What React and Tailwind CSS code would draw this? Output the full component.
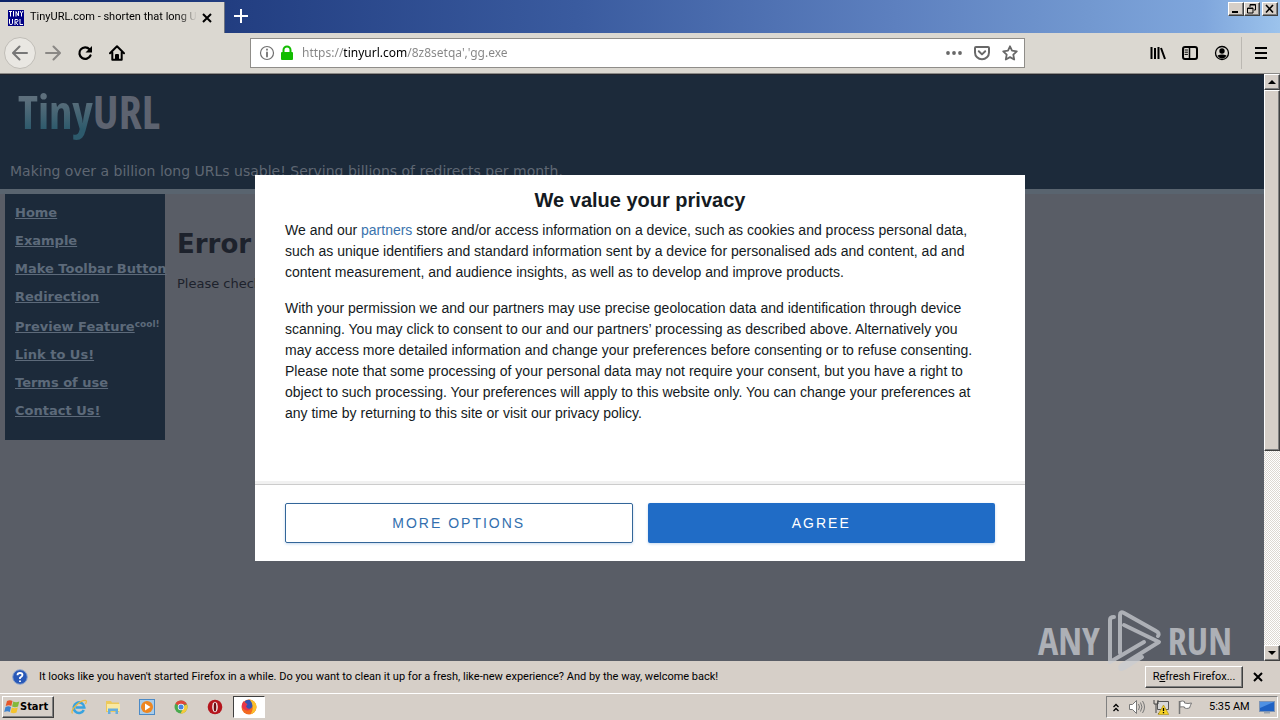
import React from 'react';

const bevelOut =
  'border border-t-white border-l-white border-r-[#404040] border-b-[#404040] shadow-[inset_-1px_-1px_0_#808080]';
const bevelIn = 'border border-t-[#808080] border-l-[#808080] border-r-white border-b-white';

const sidebarLinks = [
  { label: 'Home' },
  { label: 'Example' },
  { label: 'Make Toolbar Button' },
  { label: 'Redirection' },
  { label: 'Preview Feature', note: 'cool!' },
  { label: 'Link to Us!' },
  { label: 'Terms of use' },
  { label: 'Contact Us!' },
];

const Icon = ({ children, className = 'h-4 w-4', viewBox = '0 0 16 16' }) => (
  <svg
    viewBox={viewBox}
    className={className}
    fill="none"
    stroke="currentColor"
    strokeWidth="2"
    strokeLinecap="round"
    strokeLinejoin="round"
    aria-hidden="true"
  >
    {children}
  </svg>
);

const CloseIcon = ({ className }) => (
  <Icon className={className} viewBox="0 0 10 10">
    <path d="M1 1l8 8M9 1l-8 8" strokeLinecap="butt" />
  </Icon>
);

/* Tab strip with window controls */
const TitleBar = () => (
  <header className="flex h-[33px] shrink-0 items-start bg-[linear-gradient(to_right,#0c2468_0%,#233f82_19%,#3a5b9f_45%,#5d80bf_70%,#7298d0_85%,#7fa6dc_94%,#9cc3ec_100%)]">
    <div className="mt-0.5 flex h-[31px] w-[225px] items-center border-r border-[#6d7380] bg-[#dbd8d1] pl-2">
      <svg viewBox="0 0 16 16" className="h-4 w-4 shrink-0" aria-hidden="true">
        <rect width="16" height="16" fill="#000085" />
        <path
          d="M1 1.500h3M2.500 1.500v5M5.500 1v5.500M8 6.500v-5l2.500 4.500v-5M12 1l1.500 2.500L15 1M13.500 3v3.500M1.500 9v4.500q0 1 1.500 1t1.500-1V9M7 15V9.500h2q1 0 1 1t-1 1.500H7.500L10 15M12 9v5.500h3"
          fill="none"
          stroke="#fff"
        />
      </svg>
      <div className="ml-1.5 w-[167px] overflow-hidden bg-[linear-gradient(to_right,#000_148px,transparent_167px)] bg-clip-text text-[11px] whitespace-nowrap text-transparent">
        TinyURL.com - shorten that long URL
      </div>
      <button aria-label="Close tab" className="flex h-5 w-5 items-center justify-center">
        <CloseIcon className="h-2.5 w-2.5" />
      </button>
    </div>
    <button aria-label="New tab" className="flex h-8 w-8 items-center justify-center text-white">
      <Icon className="h-3.5 w-3.5" viewBox="0 0 14 14">
        <path d="M7 0v14M0 7h14" strokeLinecap="butt" />
      </Icon>
    </button>
    <div className="mt-0.5 mr-0.5 ml-auto flex">
      <button aria-label="Minimize" className={`flex h-3.5 w-4 items-center justify-center bg-[#d6cfc8] ${bevelOut}`}>
        <svg viewBox="0 0 12 10" className="h-2.5 w-3" aria-hidden="true">
          <path d="M2 7h6v2H2z" />
        </svg>
      </button>
      <button aria-label="Restore" className={`flex h-3.5 w-4 items-center justify-center bg-[#d6cfc8] ${bevelOut}`}>
        <svg viewBox="0 0 12 10" className="h-2.5 w-3" fill="none" stroke="#000" aria-hidden="true">
          <path d="M4 3V.5h5.500V6H8M4 1h5.500M1.500 4h5.500v5H1.500zM1.500 4.500h5.500" />
        </svg>
      </button>
      <button aria-label="Close" className={`ml-0.5 flex h-3.5 w-4 items-center justify-center bg-[#d6cfc8] ${bevelOut}`}>
        <svg viewBox="0 0 12 10" className="h-2.5 w-3" fill="none" stroke="#000" strokeWidth="1.600" aria-hidden="true">
          <path d="M2 1l7 7.500M9 1L2 8.500" />
        </svg>
      </button>
    </div>
  </header>
);

const NavBar = () => (
  <nav className="flex h-[41px] shrink-0 items-center border-b border-[#8b8a87] bg-[#dbd8d1] pl-1">
    <button aria-label="Back" className="flex h-8 w-8 items-center justify-center rounded-full border border-[#c0bdb7] bg-[#e9e7e2] text-[#777]">
      <Icon>
        <path d="M15 8H1.500M7.500 1.500L1 8l6.500 6.500" />
      </Icon>
    </button>
    <div className="ml-px flex">
      <button aria-label="Forward" className="flex h-8 w-8 items-center justify-center text-[#8a8885]">
        <Icon>
          <path d="M1 8h13.500M8.500 1.500L15 8l-6.500 6.500" />
        </Icon>
      </button>
      <button aria-label="Reload" className="flex h-8 w-8 items-center justify-center">
        <Icon>
          <path d="M12.500 4.200A5.800 5.800 0 1 0 13.500 10.500" strokeWidth="2.200" />
          <path d="M15 1v6.500H8.500z" fill="currentColor" stroke="none" />
        </Icon>
      </button>
      <button aria-label="Home" className="flex h-8 w-8 items-center justify-center">
        <Icon>
          <path d="M1 8.200L8 1.300l7 6.900M3.300 7.500v7.200h9.400V7.500" />
          <path d="M7 14v-4h2v4" />
        </Icon>
      </button>
    </div>
    <div className="ml-[117px] flex h-[30px] min-w-0 flex-1 items-center border border-[#8f8d89] bg-white pr-1.5 pl-2">
      <Icon className="h-4 w-4 shrink-0 text-[#6f6f6f]">
        <circle cx="8" cy="8" r="6.500" strokeWidth="1.200" />
        <path d="M8 7.500v4M8 4.500v.3" strokeWidth="1.800" />
      </Icon>
      <svg viewBox="0 0 16 16" className="ml-1 h-4 w-4 shrink-0" aria-hidden="true">
        <path d="M4.500 8V5a3.500 3.500 0 0 1 7 0v3" fill="none" stroke="#12bc00" strokeWidth="2" />
        <rect x="2" y="7" width="12" height="8" rx="1" fill="#12bc00" />
      </svg>
      <input
        aria-label="Address"
        defaultValue="https://tinyurl.com/8z8setqa','gg.exe"
        spellCheck={false}
        className="ml-[7px] min-w-0 flex-1 bg-[linear-gradient(to_right,#858585_42px,#000_42px,#000_105px,#858585_105px)] bg-clip-text font-['Noto_Sans','Liberation_Sans',sans-serif] text-xs text-transparent outline-none"
      />
      <div className="flex gap-3 text-[#686868]">
        <button aria-label="Page actions">
          <svg viewBox="0 0 16 16" className="h-4 w-4" fill="currentColor" aria-hidden="true">
            <circle cx="2" cy="8" r="1.900" />
            <circle cx="8" cy="8" r="1.900" />
            <circle cx="14" cy="8" r="1.900" />
          </svg>
        </button>
        <button aria-label="Save to Pocket">
          <Icon>
            <path d="M2 2h12q1 0 1 1v4.500a7 6.800 0 0 1-14 0V3q0-1 1-1z" />
            <path d="M4.800 6.300L8 9.400l3.200-3.100" />
          </Icon>
        </button>
        <button aria-label="Bookmark this page">
          <Icon>
            <path d="M8 1.300l2 4.400 4.800.6-3.500 3.300.9 4.900L8 12.100l-4.200 2.400.9-4.900L1.200 6.300 6 5.700z" strokeWidth="1.800" />
          </Icon>
        </button>
      </div>
    </div>
    <div className="mr-[3px] ml-[117px] flex items-center">
      <button aria-label="Library" className="flex h-8 w-8 items-center justify-center">
        <Icon>
          <path d="M1.500 2v12M5 3v11M8.500 2v12M11 3l4 11" strokeLinecap="butt" />
        </Icon>
      </button>
      <button aria-label="Sidebars" className="flex h-8 w-8 items-center justify-center">
        <Icon>
          <rect x="1" y="2" width="14" height="12" rx="2" />
          <path d="M7.500 2v12" strokeWidth="1.500" />
          <path d="M3 5h2.500M3 7.200h2.500M3 9.400h2.500" strokeWidth="1" />
        </Icon>
      </button>
      <button aria-label="Account" className="flex h-8 w-8 items-center justify-center">
        <Icon>
          <circle cx="8" cy="8" r="6.500" strokeWidth="1.300" />
          <circle cx="8" cy="6" r="2.700" fill="currentColor" stroke="none" />
          <path d="M3.500 10.500q4.500-2 9 0-1.500 3-4.500 3t-4.500-3z" fill="currentColor" stroke="none" />
        </Icon>
      </button>
      <div className="ml-[3px] h-8 w-px bg-[#bbb8b2]" />
      <button aria-label="Menu" className="ml-[3px] flex h-8 w-8 items-center justify-center">
        <Icon>
          <path d="M2 3h12M2 8h12M2 13h12" strokeLinecap="butt" />
        </Icon>
      </button>
    </div>
  </nav>
);

const SitePage = () => (
  <div className="min-w-0 flex-1 overflow-hidden bg-[#595d66] font-['DejaVu_Sans',Verdana,sans-serif]">
    <div className="h-[115px] border-t border-[#22242c] bg-[#1c2a3a] px-2.5 pt-1.5">
      <div className="pl-2 font-['Open_Sans_Condensed','Roboto_Condensed','Liberation_Sans_Narrow',sans-serif] text-[46px] leading-[60px] font-bold">
        <span className="bg-[linear-gradient(to_bottom,#5d6f7c_30%,#2d5a6c_80%)] bg-clip-text text-transparent">Tiny</span>
        <span className="text-[#5d6370]">URL</span>
      </div>
      <p className="mt-5 text-sm whitespace-nowrap text-[#5f6773]">
        Making over a billion long URLs usable! Serving billions of redirects per month.
      </p>
    </div>
    <div className="h-[5px] bg-[#59646f]" />
    <div className="flex pl-[5px]">
      <ul className="h-[246px] w-40 bg-[#1c2a3a] pt-[5px] pl-2.5 text-[13px] leading-7 font-bold whitespace-nowrap text-[#5d6a7a]">
        {sidebarLinks.map(({ label, note }) => (
          <li key={label} className={note ? 'h-[30px] pt-0.5' : 'h-7'}>
            <a href="#" className="underline">
              {label}
            </a>
            {note && <sup className="text-[9px] leading-none">{note}</sup>}
          </li>
        ))}
      </ul>
      <div className="pt-[30px] pl-3 text-[#1d222c]">
        <h1 className="text-[26px] leading-10 font-bold">Error</h1>
        <p className="mt-2.5 text-[13px] leading-5">Please check</p>
      </div>
    </div>
  </div>
);

const ScrollBar = () => (
  <div className="flex w-4 shrink-0 flex-col bg-[repeating-conic-gradient(#fff_0_25%,#dcd8d2_0_50%)] bg-size-[2px_2px]">
    <button aria-label="Scroll up" className={`flex h-4 items-center justify-center bg-[#d6cfc8] ${bevelOut}`}>
      <svg viewBox="0 0 8 4" className="h-1 w-2" aria-hidden="true">
        <path d="M4 0l4 4H0z" />
      </svg>
    </button>
    <div className={`h-[361px] bg-[#d6cfc8] ${bevelOut}`} />
    <button aria-label="Scroll down" className={`mt-auto flex h-4 items-center justify-center bg-[#d6cfc8] ${bevelOut}`}>
      <svg viewBox="0 0 8 4" className="h-1 w-2" aria-hidden="true">
        <path d="M0 0h8L4 4z" />
      </svg>
    </button>
  </div>
);

const PrivacyDialog = () => (
  <div className="absolute inset-0 flex items-center justify-center pt-px">
    <section
      role="dialog"
      aria-labelledby="privacy-title"
      className="flex w-[770px] flex-col bg-white font-['Liberation_Sans',Arial,sans-serif] text-[#141a22]"
    >
      <div className="h-[310px] border-b border-[#cccccc] px-[30px] pt-2.5 shadow-[inset_0_-3px_0_#f1f1f1]">
        <h2 id="privacy-title" className="text-center text-xl leading-[30px] font-bold">
          We value your privacy
        </h2>
        <div className="mt-[5px] space-y-[15px] pr-3.5 text-sm leading-[21px]">
          <p>
            We and our{' '}
            <a href="#" className="text-[#3a73ad]">
              partners
            </a>{' '}
            store and/or access information on a device, such as cookies and process personal data, such as unique
            identifiers and standard information sent by a device for personalised ads and content, ad and content
            measurement, and audience insights, as well as to develop and improve products.
          </p>
          <p>
            With your permission we and our partners may use precise geolocation data and identification through device
            scanning. You may click to consent to our and our partners’ processing as described above. Alternatively you
            may access more detailed information and change your preferences before consenting or to refuse consenting.
            Please note that some processing of your personal data may not require your consent, but you have a right to
            object to such processing. Your preferences will apply to this website only. You can change your preferences
            at any time by returning to this site or visit our privacy policy.
          </p>
        </div>
      </div>
      <div className="grid grid-cols-2 gap-[15px] px-[30px] py-[18px] text-sm tracking-[2px]">
        <button className="h-10 rounded-xs border border-[#336699] text-[#336fae] shadow-[0_1px_3px_#c4d8ee]">
          MORE OPTIONS
        </button>
        <button className="h-10 rounded-xs bg-[#206cc6] text-white shadow-[0_1px_3px_#c4d8ee]">AGREE</button>
      </div>
    </section>
  </div>
);

const Watermark = () => (
  <div className="pointer-events-none absolute right-12 bottom-12 flex h-16 items-center gap-1.5 font-['Open_Sans_Condensed','Liberation_Sans_Narrow',sans-serif] text-[38px] leading-none font-light text-[#c9ccd1]/75">
    <span>ANY</span>
    <svg viewBox="0 0 56 64" className="h-16 w-14" fill="none" stroke="currentColor" strokeWidth="4" strokeLinejoin="round" strokeLinecap="round" aria-hidden="true">
      <path d="M8 9Q4 9 4 12V54L38 34M14 45V7q0-4 4-2L50 23q4 2 2 5M18 17L53 34 16 57q-3 2-1 4l3-1 18-11" />
    </svg>
    <span>RUN</span>
  </div>
);

const NotificationBar = () => (
  <div className="flex h-8 shrink-0 items-center bg-[#d6cfc8] pl-3">
    <svg viewBox="0 0 16 16" className="h-4 w-4" aria-hidden="true">
      <circle cx="8" cy="8" r="7.300" fill="#2858b8" stroke="#8da4cc" />
      <path d="M5.500 6.200Q5.500 4 8 4t2.500 2Q10.500 7.200 8 8.700V10M8 11.500v1.500" fill="none" stroke="#fff" strokeWidth="1.800" />
    </svg>
    <p className="ml-[11px] text-[11px] whitespace-nowrap">
      It looks like you haven't started Firefox in a while. Do you want to clean it up for a fresh, like-new experience?
      And by the way, welcome back!
    </p>
    <button className={`mr-[5px] ml-auto h-[22px] w-[98px] bg-[#d6cfc8] text-[11px] whitespace-nowrap ${bevelOut}`}>
      R<u>e</u>fresh Firefox...
    </button>
    <button aria-label="Dismiss" className="mr-3 flex h-5 w-5 items-center justify-center">
      <CloseIcon className="h-2.5 w-2.5" />
    </button>
  </div>
);

const TaskButton = ({ label, children }) => (
  <button aria-label={label} className="flex h-[22px] w-[34px] items-center justify-center">
    <svg viewBox="0 0 16 16" className="h-4 w-4" aria-hidden="true">
      {children}
    </svg>
  </button>
);

const TaskBar = () => (
  <footer className="flex h-[27px] shrink-0 items-center border-t border-white bg-[#d6cfc8] px-0.5">
    <button className={`flex h-[22px] w-[52px] items-center bg-[#d6cfc8] pl-px font-['DejaVu_Sans_Condensed',Tahoma,sans-serif] text-[11px] font-bold ${bevelOut}`}>
      <svg viewBox="0 0 16 16" className="h-4 w-4 shrink-0" aria-hidden="true">
        <path d="M3 2q3-1.500 5.500 0L7.300 7Q5 5.500 1.700 7z" fill="#e5562a" />
        <path d="M9.300 2.500q2.500 1.500 6 0L14 7.500q-3 1.300-5.900 0z" fill="#83b93a" />
        <path d="M1.500 8q3-1.500 5.500 0l-1.200 5Q3.500 11.500.2 13z" fill="#3c82cf" />
        <path d="M7.800 8.500q2.500 1.500 6 0L12.500 13.500q-3 1.300-5.900 0z" fill="#f4c32e" />
      </svg>
      Start
    </button>
    <div className="ml-2 flex">
      <TaskButton label="Internet Explorer">
        <path d="M12.800 11A5.300 5.300 0 1 1 13.300 8.500H4.500" fill="none" stroke="#38a3df" strokeWidth="2.600" />
        <path d="M1.500 14.500Q-.5 12 5 6.500T15 1.500q.8 1-.5 3.500" fill="none" stroke="#edb93a" strokeWidth="1.200" />
      </TaskButton>
      <TaskButton label="Windows Explorer">
        <path d="M1 2h5l1 1.500h7V13H1z" fill="#ecc95c" />
        <path d="M2 5h13v7H2z" fill="#f9e9a2" />
        <path d="M3 15V9.500h10V15h-2.500v-3h-5v3z" fill="#67aede" />
      </TaskButton>
      <TaskButton label="Windows Media Player">
        <rect x=".5" y=".5" width="15" height="15" fill="#a9cce9" stroke="#4c8ac6" />
        <circle cx="8" cy="8" r="6" fill="#ee8620" />
        <path d="M6 4.500v7L11.500 8z" fill="#fff" />
      </TaskButton>
      <TaskButton label="Google Chrome">
        <circle cx="8" cy="8" r="6.500" fill="#49a94d" />
        <path d="M8 8L2.400 4.700A6.500 6.500 0 0 1 14 5.500H8z" fill="#e0463a" />
        <path d="M8 8l6-2.500A6.500 6.500 0 0 1 7.500 14.500L10.500 9z" fill="#f5ca3b" />
        <circle cx="8" cy="8" r="3.200" fill="#fff" />
        <circle cx="8" cy="8" r="2.500" fill="#4684e0" />
      </TaskButton>
      <TaskButton label="Opera">
        <circle cx="8" cy="8" r="7.300" fill="#b5151d" />
        <ellipse cx="8" cy="8" rx="2.800" ry="5.300" fill="#f4eeee" />
        <ellipse cx="8" cy="8" rx="1.300" ry="4.500" fill="#6d0d12" />
      </TaskButton>
    </div>
    <button aria-label="Firefox" className="ml-px flex h-[22px] w-8 items-center justify-center border border-t-[#404040] border-l-[#404040] border-r-white border-b-white bg-white">
      <svg viewBox="0 0 16 16" className="h-4 w-4" aria-hidden="true">
        <circle cx="8" cy="8" r="7.500" fill="#f26a21" />
        <path d="M8 .5Q15 1 15.500 8q-.5 6-6 7.200Q13 10 11 6 8 4 8 .5z" fill="#fbc02d" />
        <path d="M3.500 2.500Q6 0 9 1q2.500 3 2.500 6a4 4 0 0 1-7.500 1q-.5-2 1.500-3z" fill="#3552b5" />
        <path d="M.8 6Q1.500 3 3 2q0 2 3.500 3L5 7.500q1.500 3 4.500 2-1 3-5 1.500T.8 6z" fill="#e8344a" />
      </svg>
    </button>
    <div className={`ml-auto flex h-[22px] w-[172px] items-center ${bevelIn}`}>
      <button aria-label="Show hidden icons" className="ml-1 flex h-4 w-2.5 items-center justify-center">
        <svg viewBox="0 0 6 9" className="h-[9px] w-1.5" fill="none" stroke="#000" strokeWidth="1.300" aria-hidden="true">
          <path d="M.5 4L3 1.500 5.500 4M.5 8L3 5.500 5.500 8" />
        </svg>
      </button>
      <svg viewBox="0 0 16 16" className="ml-2 h-4 w-4" fill="none" stroke="#777" aria-hidden="true">
        <path d="M.5 5.500h3l4-4v13l-4-4h-3z" fill="#fff" />
        <path d="M9.500 5q2 3 0 6M11.500 3.500q3 4.500 0 9M13.500 2q4 6 0 12" />
      </svg>
      <svg viewBox="0 0 16 16" className="ml-2 h-4 w-4" aria-hidden="true">
        <path d="M4.500 2.500h11v8h-11z" fill="#d8d8d8" stroke="#555" />
        <path d="M1 1v4h4V1M3 5v9" fill="none" stroke="#444" />
        <path d="M5 14.500h5" stroke="#444" />
        <path d="M10.500 6l5.300 9.500H5.200z" fill="#f6d224" stroke="#a78a10" strokeWidth=".6" />
        <path d="M10.500 9v3M10.500 13v1.200" stroke="#000" strokeWidth="1.300" />
      </svg>
      <svg viewBox="0 0 16 16" className="ml-2 h-4 w-4" aria-hidden="true">
        <path d="M2.500 15V2" stroke="#777" strokeWidth="1.500" />
        <path d="M3 2.500q2.500-1 4.500 0V4q3.500 1 7 0-1 2-2 5-3 1-5 0V8Q5.500 7.500 3 8z" fill="#fff" stroke="#777" />
      </svg>
      <time className="ml-4 text-[11px] whitespace-nowrap">5:35 AM</time>
      <svg viewBox="0 0 16 16" className="mr-0.5 ml-auto h-4 w-4 shrink-0" aria-hidden="true">
        <rect x=".5" y="2.500" width="15" height="10" fill="#1f62c4" stroke="#7f95b5" />
        <path d="M1 3h14L1 9z" fill="#4f91e3" />
        <path d="M5 13h6v1.500H5z" fill="#9aa3ae" />
      </svg>
    </div>
  </footer>
);

const App = () => (
  <div className="flex h-screen flex-col overflow-hidden bg-[#d6cfc8] font-['Roboto',Tahoma,sans-serif] text-black">
    <TitleBar />
    <NavBar />
    <main className="relative flex min-h-0 flex-1">
      <SitePage />
      <ScrollBar />
      <PrivacyDialog />
    </main>
    <NotificationBar />
    <TaskBar />
    <Watermark />
  </div>
);

export default App;
